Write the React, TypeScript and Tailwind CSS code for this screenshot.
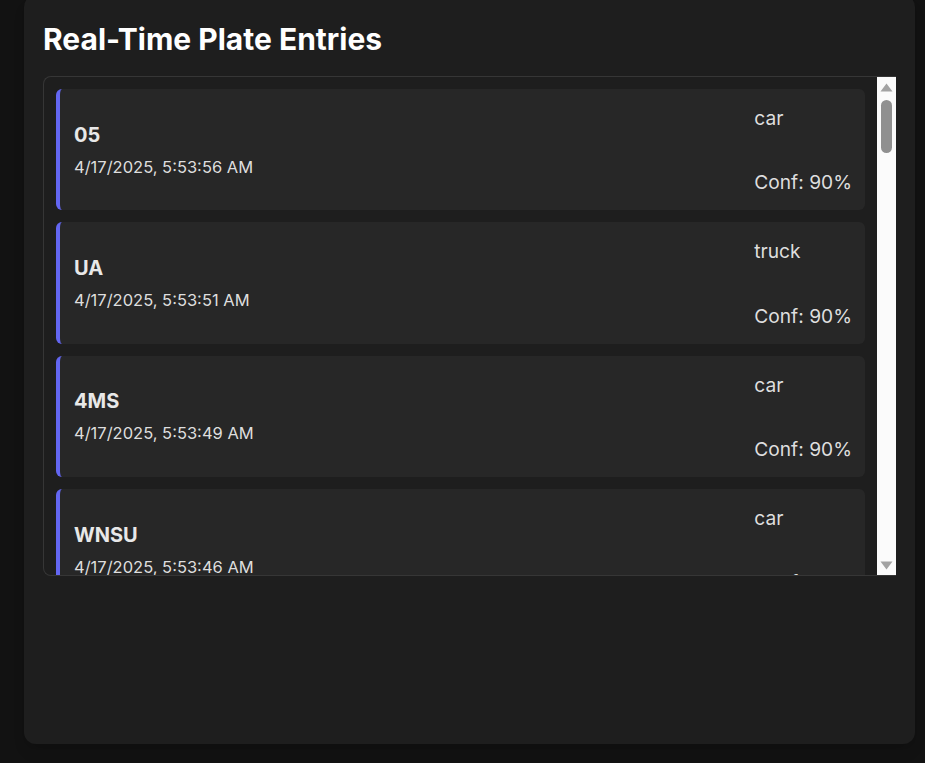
import React from 'react';

type Entry = { plate: string; time: string; vehicle: string; conf: number };

const entries: Entry[] = [
  { plate: '05', time: '4/17/2025, 5:53:56 AM', vehicle: 'car', conf: 90 },
  { plate: 'UA', time: '4/17/2025, 5:53:51 AM', vehicle: 'truck', conf: 90 },
  { plate: '4MS', time: '4/17/2025, 5:53:49 AM', vehicle: 'car', conf: 90 },
  { plate: 'WNSU', time: '4/17/2025, 5:53:46 AM', vehicle: 'car', conf: 90 },
  { plate: 'KA05', time: '4/17/2025, 5:53:41 AM', vehicle: 'car', conf: 90 },
  { plate: 'MH12', time: '4/17/2025, 5:53:37 AM', vehicle: 'bus', conf: 90 },
  { plate: '7TRX', time: '4/17/2025, 5:53:33 AM', vehicle: 'car', conf: 90 },
  { plate: 'DL3C', time: '4/17/2025, 5:53:29 AM', vehicle: 'truck', conf: 90 },
];

function EntryCard({ entry }: { entry: Entry }) {
  return (
    <div className="flex shrink-0 justify-between rounded-md border-l-4 border-[#6366f1] bg-[#272727] pl-[14px] pr-[13px]">
      <div className="flex flex-col justify-center">
        <div className="text-xl font-bold text-[#e8e8e8]">{entry.plate}</div>
        <div className="mt-[6px] text-[16.5px] leading-6 text-[#dedede]">{entry.time}</div>
      </div>
      <div className="flex flex-col pt-[15px] pb-[14px] text-[19.2px] leading-7 text-[#dedede]">
        <div>{entry.vehicle}</div>
        <div className="mt-[36.3px]">Conf: {entry.conf}%</div>
      </div>
    </div>
  );
}

function ScrollTrack() {
  return (
    <div className="flex w-[19px] shrink-0 flex-col items-center bg-[#fbfbfb] pt-[6px] pb-[5px]">
      <svg width="13" height="9" viewBox="0 0 13 9">
        <polygon points="6.5,0.5 12.5,8.5 0.5,8.5" fill="#a3a3a3" />
      </svg>
      <div className="mt-[8px] h-[53px] w-[11px] rounded-full bg-[#909090]" />
      <div className="flex-1" />
      <svg width="13" height="9" viewBox="0 0 13 9">
        <polygon points="0.5,0.5 12.5,0.5 6.5,8.5" fill="#a3a3a3" />
      </svg>
    </div>
  );
}

export default function App() {
  return (
    <div className="h-[763px] overflow-hidden bg-[#121212] font-['Inter',sans-serif]">
      <div className="ml-6 mr-[10px] -mt-[5px] h-[749px] rounded-xl bg-[#1e1e1e] px-[19px] pt-[26px] shadow-lg">
        <h2 className="mb-[19px] text-3xl font-bold text-white">Real-Time Plate Entries</h2>

        {/* Scrolling list of detected plates */}
        <div className="flex h-[500px] overflow-hidden rounded-l-lg border border-r-0 border-[#363636]">
          <div className="flex flex-1 flex-col gap-3 overflow-hidden p-3">
            {entries.map((entry) => (
              <EntryCard key={entry.plate + entry.time} entry={entry} />
            ))}
          </div>
          <ScrollTrack />
        </div>
      </div>
    </div>
  );
}
